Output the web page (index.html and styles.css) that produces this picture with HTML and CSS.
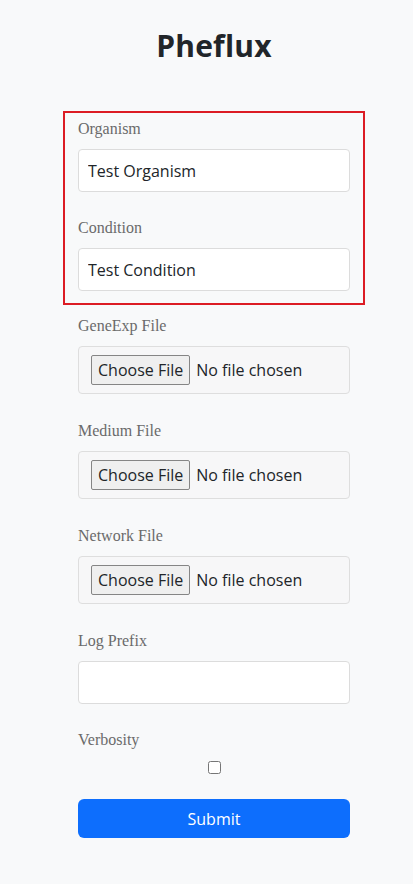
FILE: index.html
```html
<!DOCTYPE html>
<html lang="en">
<head>
<meta charset="utf-8">
<title>Pheflux</title>
<link rel="stylesheet" href="styles.css">
</head>
<body>
<main class="page">
  <h1 class="title">Pheflux</h1>
  <form class="form">
    <div class="highlight">
      <div class="field">
        <label class="label" for="organism">Organism</label>
        <input class="text-input" id="organism" type="text" value="Test Organism">
      </div>
      <div class="field field-last">
        <label class="label" for="condition">Condition</label>
        <input class="text-input" id="condition" type="text" value="Test Condition">
      </div>
    </div>
    <div class="plain">
      <div class="field field-file">
        <label class="label" for="geneexp">GeneExp File</label>
        <div class="file-box"><input class="file-input" id="geneexp" type="file"></div>
      </div>
      <div class="field field-file">
        <label class="label" for="medium">Medium File</label>
        <div class="file-box"><input class="file-input" id="medium" type="file"></div>
      </div>
      <div class="field field-file">
        <label class="label" for="network">Network File</label>
        <div class="file-box"><input class="file-input" id="network" type="file"></div>
      </div>
      <div class="field">
        <label class="label" for="logprefix">Log Prefix</label>
        <input class="text-input" id="logprefix" type="text">
      </div>
      <div class="field field-check">
        <label class="label label-check" for="verbosity">Verbosity</label>
        <div class="check-row"><input class="checkbox" id="verbosity" type="checkbox"></div>
      </div>
      <button class="submit" type="button">Submit</button>
    </div>
  </form>
</main>
</body>
</html>
```

FILE: styles.css
```css
* { box-sizing: border-box; }
html, body { margin: 0; padding: 0; }
body {
  background: #f8f9fa;
  color: #212529;
  font-family: "Open Sans", "Noto Sans", sans-serif;
}
.page {
  padding: 20px 0 40px 63px;
  width: 365px;
}
.title {
  margin: 0;
  height: 91px;
  padding-top: 6px;
  text-align: center;
  font-size: 30px;
  font-weight: 700;
  line-height: 40px;
  color: #212529;
  letter-spacing: 0.2px;
}
.form { display: flex; flex-direction: column; }
.highlight {
  border: 2px solid #dc1c24;
  padding: 4px 13px 12px 13px;
}
.plain {
  padding: 9px 15px 0 15px;
  display: flex;
  flex-direction: column;
}
.field { display: flex; flex-direction: column; margin-bottom: 24px; }
.field-file { margin-bottom: 25px; }
.field-last { margin-bottom: 0; }
.label {
  font-family: "Liberation Serif", "DejaVu Serif", serif;
  font-size: 16px;
  line-height: 24px;
  color: #6a6a6a;
  margin-bottom: 8px;
}
.text-input {
  height: 43px;
  width: 100%;
  border: 1px solid #dcdcdc;
  border-radius: 4px;
  background: #fff;
  padding: 0 9px;
  font-family: "Open Sans", "Noto Sans", sans-serif;
  font-size: 16px;
  color: #212529;
}
.file-box {
  height: 48px;
  border: 1px solid #dedede;
  border-radius: 4px;
  background: #f7f7f8;
  display: flex;
  align-items: center;
  padding: 0 12px;
}
.file-input {
  font-family: "Open Sans", "Noto Sans", sans-serif;
  font-size: 16px;
  color: #212529;
}
.file-input::file-selector-button {
  font-family: "Open Sans", "Noto Sans", sans-serif;
  font-size: 16px;
  color: #212529;
  background: #efefef;
  border: 1px solid #858585;
  border-radius: 2px;
  height: 30px;
  padding: 0 6px;
  margin-right: 6px;
}
.field-check { margin-bottom: 0; }
.label-check { margin-bottom: 0; }
.check-row { display: flex; justify-content: center; padding: 9px 0 0 0; height: 47px; }
.checkbox {
  margin: 0;
  width: 13px;
  height: 13px;
}
.submit {
  height: 39px;
  width: 100%;
  border: none;
  border-radius: 6px;
  background: #0d6efd;
  color: #fff;
  font-family: "Open Sans", "Noto Sans", sans-serif;
  font-size: 16px;
}
```
